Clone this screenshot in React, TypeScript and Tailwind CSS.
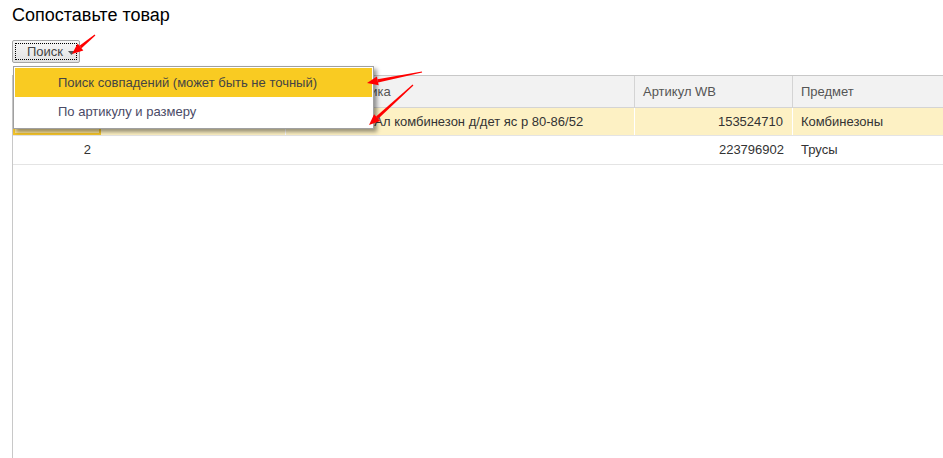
import React from 'react';

type Pt = [number, number];

// red hand-drawn pointer: tapered shaft + solid head
const Arrow: React.FC<{ from: Pt; to: Pt }> = ({ from, to }) => {
  const [x1, y1] = from;
  const [x2, y2] = to;
  const dx = x2 - x1;
  const dy = y2 - y1;
  const len = Math.hypot(dx, dy);
  const ux = dx / len;
  const uy = dy / len;
  const nx = -uy;
  const ny = ux;
  const headLen = 11;
  const headW = 4.5;
  const bx = x2 - ux * headLen;
  const by = y2 - uy * headLen;
  const shaft = [
    [x1 + nx * 0.6, y1 + ny * 0.6],
    [bx + nx * 1.6, by + ny * 1.6],
    [bx - nx * 1.6, by - ny * 1.6],
    [x1 - nx * 0.6, y1 - ny * 0.6],
  ];
  const head = [
    [x2, y2],
    [bx + nx * headW, by + ny * headW],
    [bx - nx * headW, by - ny * headW],
  ];
  const pts = (a: number[][]) => a.map((p) => p.join(',')).join(' ');
  return (
    <g fill="#ff0000">
      <polygon points={pts(shaft)} />
      <polygon points={pts(head)} />
    </g>
  );
};

const headerCell = 'h-full flex items-center px-[8px] border-r border-[#d4d4d4] text-[#555]';

const App: React.FC = () => {
  return (
    <div
      className="relative w-[943px] h-[458px] overflow-hidden bg-white text-[13px] text-[#333]"
      style={{ fontFamily: '"Liberation Sans", Arial, sans-serif' }}
    >
      <div className="pl-[12px] pt-[5px] text-[18px] leading-[21px] text-black">Сопоставьте товар</div>

      {/* toolbar */}
      <div className="pl-[12px] mt-[14px]">
        <div className="w-[68px] h-[23px] border border-[#a6a6a6] rounded-[2px] bg-gradient-to-b from-[#f6f6f6] to-[#e2e2e2] p-[2px]">
          <div className="h-full border border-dotted border-black flex items-center pl-[11px] gap-[5px] text-[#444]">
            <span>Поиск</span>
            <svg width="7" height="4" viewBox="0 0 7 4" className="mt-[3px]">
              <polygon points="0,0 7,0 3.5,4" fill="#555" />
            </svg>
          </div>
        </div>
      </div>

      {/* table */}
      <div className="ml-[12px] mt-[12px] border-l border-t border-[#c8c8c8] h-[400px]">
        <div className="grid grid-cols-[88px_185px_349px_158px_1fr] h-[32px] bg-[#f2f2f2] border-b border-[#d4d4d4]">
          <div className={headerCell}></div>
          <div className={headerCell}></div>
          <div className={headerCell}>Характеристика</div>
          <div className={headerCell}>Артикул WB</div>
          <div className="h-full flex items-center px-[8px] text-[#555]">Предмет</div>
        </div>

        <div className="grid grid-cols-[88px_185px_349px_158px_1fr] h-[28px] bg-[#fdf1c4] border-b border-[#e4e4e4]">
          <div className="h-full border-2 border-[#f4c42a] bg-[#fbe49a]"></div>
          <div className="h-full border-r border-white"></div>
          <div className="h-full flex items-center pl-[12px] pr-[8px] border-r border-white whitespace-nowrap overflow-hidden">
            Комбинезон Ал комбинезон д/дет яс р 80-86/52
          </div>
          <div className="h-full flex items-center justify-end pr-[9px] border-r border-white">153524710</div>
          <div className="h-full flex items-center px-[8px]">Комбинезоны</div>
        </div>

        <div className="grid grid-cols-[88px_185px_349px_158px_1fr] h-[29px] border-b border-[#e4e4e4]">
          <div className="h-full flex items-center justify-end pr-[10px]">2</div>
          <div></div>
          <div></div>
          <div className="h-full flex items-center justify-end pr-[9px]">223796902</div>
          <div className="h-full flex items-center px-[8px]">Трусы</div>
        </div>
      </div>

      {/* dropdown menu */}
      <div className="absolute left-[13px] top-[66px] w-[361px] border border-[#a0a0a0] bg-white shadow-[3px_3px_4px_rgba(0,0,0,0.4)] p-[1px]">
        <div className="h-[29px] bg-[#f9cb22] flex items-center pl-[43px] text-[#444]">
          Поиск совпадений (может быть не точный)
        </div>
        <div className="h-[30px] flex items-center pl-[43px] text-[#4a4a66]">По артикулу и размеру</div>
      </div>

      {/* annotation arrows */}
      <svg className="absolute inset-0 pointer-events-none" width="943" height="458">
        <Arrow from={[95, 35]} to={[72, 54]} />
        <Arrow from={[422, 72]} to={[367, 83]} />
        <Arrow from={[413, 85]} to={[369, 125]} />
      </svg>
    </div>
  );
};

export default App;
